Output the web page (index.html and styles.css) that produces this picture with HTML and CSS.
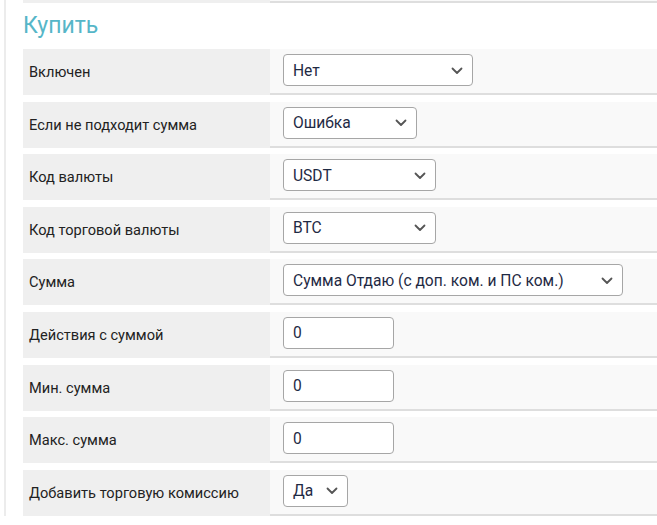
FILE: index.html
```html
<!DOCTYPE html>
<html lang="ru">
<head>
<meta charset="utf-8">
<title>Купить</title>
<link rel="stylesheet" href="styles.css">
</head>
<body>
<div class="page">
  <div class="row row-prev"><div class="label"></div><div class="value"></div></div>
  <h2 class="title">Купить</h2>
  <div class="row">
    <div class="label">Включен</div>
    <div class="value"><div class="select w190"><span>Нет</span><svg class="chev" width="12" height="8" viewBox="0 0 12 8"><path d="M1.5 1.5 L6 6 L10.5 1.5" /></svg></div></div>
  </div>
  <div class="row">
    <div class="label">Если не подходит сумма</div>
    <div class="value"><div class="select w134"><span>Ошибка</span><svg class="chev" width="12" height="8" viewBox="0 0 12 8"><path d="M1.5 1.5 L6 6 L10.5 1.5" /></svg></div></div>
  </div>
  <div class="row">
    <div class="label">Код валюты</div>
    <div class="value"><div class="select w153"><span>USDT</span><svg class="chev" width="12" height="8" viewBox="0 0 12 8"><path d="M1.5 1.5 L6 6 L10.5 1.5" /></svg></div></div>
  </div>
  <div class="row">
    <div class="label">Код торговой валюты</div>
    <div class="value"><div class="select w153"><span>BTC</span><svg class="chev" width="12" height="8" viewBox="0 0 12 8"><path d="M1.5 1.5 L6 6 L10.5 1.5" /></svg></div></div>
  </div>
  <div class="row">
    <div class="label">Сумма</div>
    <div class="value"><div class="select w340"><span>Сумма Отдаю (с доп. ком. и ПС ком.)</span><svg class="chev" width="12" height="8" viewBox="0 0 12 8"><path d="M1.5 1.5 L6 6 L10.5 1.5" /></svg></div></div>
  </div>
  <div class="row">
    <div class="label">Действия с суммой</div>
    <div class="value"><div class="input">0</div></div>
  </div>
  <div class="row">
    <div class="label">Мин. сумма</div>
    <div class="value"><div class="input">0</div></div>
  </div>
  <div class="row">
    <div class="label">Макс. сумма</div>
    <div class="value"><div class="input">0</div></div>
  </div>
  <div class="row">
    <div class="label">Добавить торговую комиссию</div>
    <div class="value"><div class="select w65"><span>Да</span><svg class="chev" width="12" height="8" viewBox="0 0 12 8"><path d="M1.5 1.5 L6 6 L10.5 1.5" /></svg></div></div>
  </div>
</div>
</body>
</html>
```

FILE: styles.css
```css
html, body {
  margin: 0;
  padding: 0;
  background: #ffffff;
}
body {
  font-family: Roboto, "Liberation Sans", Arial, sans-serif;
  color: #222;
  overflow: hidden;
}
.page {
  margin-left: 4px;
  border-left: 2px solid #ececec;
  padding-left: 17px;
  min-height: 525px;
  box-sizing: border-box;
}
.row {
  display: grid;
  grid-template-columns: 247px 1fr;
  height: 46px;
  margin-bottom: 6.6px;
}
.row-prev {
  height: 3px;
  margin-top: -43px;
  padding-top: 43px;
  margin-bottom: 0;
}
.label {
  background: #efefef;
  display: flex;
  align-items: center;
  padding-left: 6px;
  font-size: 14.6px;
  color: #222;
}
.value {
  background: #f9f9f9;
  border-bottom: 2px solid #dedede;
  height: 46px;
  box-sizing: border-box;
  display: flex;
  align-items: center;
  padding-left: 13px;
}
.row-prev .label, .row-prev .value { height: 3px; }
.title {
  margin: 0;
  height: 46px;
  box-sizing: border-box;
  padding-top: 8px;
  font-size: 23px;
  line-height: 30px;
  font-weight: 400;
  color: #56b6c8;
}
.select, .input {
  height: 32px;
  box-sizing: border-box;
  border: 1px solid #a6a6a6;
  border-radius: 4px;
  background: #fff;
  display: flex;
  align-items: center;
  justify-content: space-between;
  padding: 1px 9px 0 9px;
  font-size: 15.6px;
  color: #1f2a44;
  margin-top: -2px;
}
.input { width: 111px; }
.w190 { width: 190px; }
.w134 { width: 134px; }
.w153 { width: 153px; }
.w340 { width: 340px; }
.w65 { width: 65px; }
.chev {
  flex: none;
  fill: none;
  stroke: #555;
  stroke-width: 1.8;
  stroke-linecap: round;
  stroke-linejoin: round;
}
```
